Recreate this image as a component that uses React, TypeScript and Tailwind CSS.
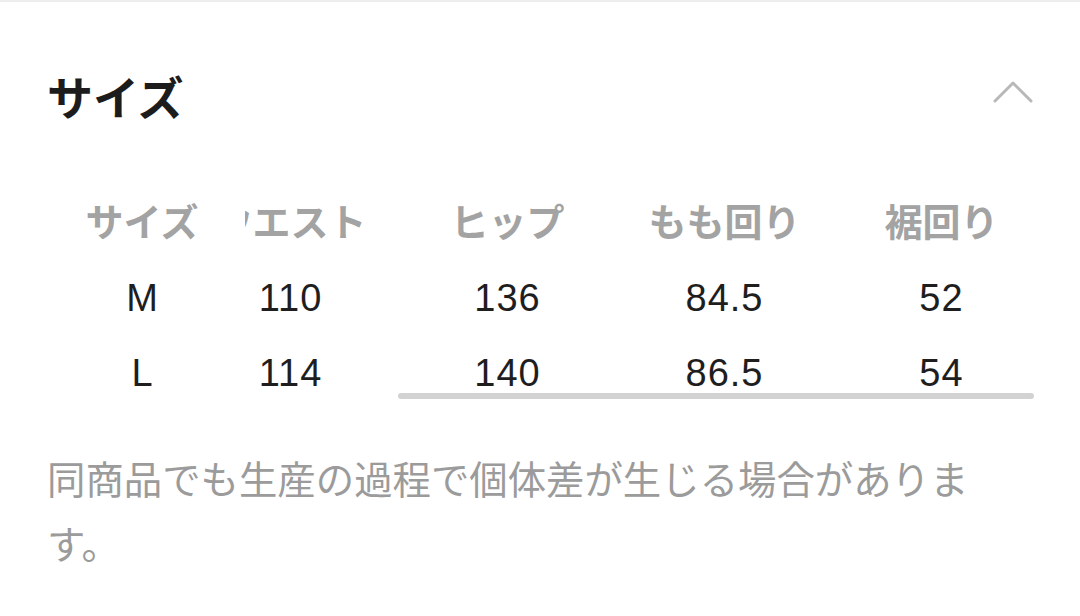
import React from "react";

const jp = '"Liberation Sans", "Noto Sans CJK JP", sans-serif';

const heads = ["ウエスト", "ヒップ", "もも回り", "裾回り"];
const rows = [
  { size: "M", vals: ["110", "136", "84.5", "52"] },
  { size: "L", vals: ["114", "140", "86.5", "54"] },
];

export default function App() {
  return (
    <div className="w-[1080px] h-[616px] bg-white overflow-hidden" style={{ fontFamily: jp }}>
      <div className="h-[2px] bg-[#ededed]" />
      <div className="pl-[47px] pr-[46px]">
        <div className="flex justify-between items-start pt-[74px]">
          <h2 className="text-[46px] font-bold leading-none text-[#1c1c1c]">サイズ</h2>
          <svg width="42" height="24" viewBox="0 0 42 24" className="mt-[4px]" fill="none">
            <path d="M3 21 L21 3 L39 21" stroke="#b8b8b8" strokeWidth="3" strokeLinecap="round" strokeLinejoin="round" />
          </svg>
        </div>

        <div className="relative mt-[63px]">
          <div className="flex">
            <div className="w-[198px] pr-[8px] shrink-0 bg-white flex flex-col relative z-10">
              <div className="h-[75px] flex items-center justify-center text-[38px] font-bold text-[#a3a3a3] leading-none">サイズ</div>
              {rows.map((r) => (
                <div key={r.size} className="h-[75px] flex items-center justify-center text-[38px] text-[#1e1e1e] leading-none">{r.size}</div>
              ))}
            </div>
            <div className="flex-1 overflow-hidden">
              <div className="-ml-[63px] flex flex-col">
                <div className="flex h-[75px]">
                  {heads.map((h) => (
                    <div key={h} className="w-[217px] shrink-0 flex items-center justify-center text-[38px] font-bold text-[#a3a3a3] leading-none">{h}</div>
                  ))}
                </div>
                {rows.map((r) => (
                  <div key={r.size} className="flex h-[75px]">
                    {r.vals.map((v, i) => (
                      <div key={i} className="w-[217px] shrink-0 flex items-center justify-center text-[38px] tracking-[1px] text-[#1e1e1e] leading-none">{v}</div>
                    ))}
                  </div>
                ))}
              </div>
            </div>
          </div>
          <div className="absolute left-[351px] top-[208px] w-[636px] h-[6px] rounded-full bg-[#d2d2d2]" />
        </div>

        <p className="mt-[38px] w-[950px] text-[38.4px] leading-[65px] text-[#9b9b9b]">
          同商品でも生産の過程で個体差が生じる場合があります。
        </p>
      </div>
    </div>
  );
}
